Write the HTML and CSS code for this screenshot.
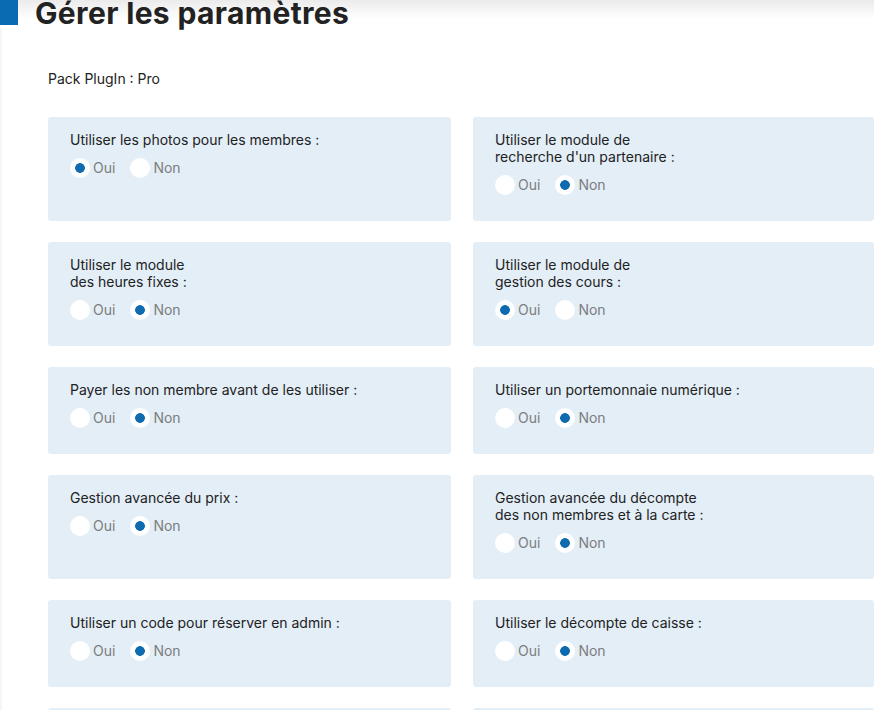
FILE: index.html
```html
<!DOCTYPE html>
<html lang="fr">
<head>
<meta charset="utf-8">
<title>Gérer les paramètres</title>
<link rel="stylesheet" href="styles.css">
</head>
<body>
<header class="page-header">
  <span class="accent"></span>
  <h1 class="title">Gérer les paramètres</h1>
</header>
<main class="content">
  <p class="pack">Pack PlugIn : Pro</p>
  <div class="grid">
    <section class="card">
      <p class="card-label">Utiliser les photos pour les membres :</p>
      <div class="choices">
        <label class="choice"><input type="radio" name="r1" checked><span>Oui</span></label>
        <label class="choice"><input type="radio" name="r1"><span>Non</span></label>
      </div>
    </section>
    <section class="card">
      <p class="card-label">Utiliser le module de<br>recherche d'un partenaire :</p>
      <div class="choices">
        <label class="choice"><input type="radio" name="r2"><span>Oui</span></label>
        <label class="choice"><input type="radio" name="r2" checked><span>Non</span></label>
      </div>
    </section>
    <section class="card">
      <p class="card-label">Utiliser le module<br>des heures fixes :</p>
      <div class="choices">
        <label class="choice"><input type="radio" name="r3"><span>Oui</span></label>
        <label class="choice"><input type="radio" name="r3" checked><span>Non</span></label>
      </div>
    </section>
    <section class="card">
      <p class="card-label">Utiliser le module de<br>gestion des cours :</p>
      <div class="choices">
        <label class="choice"><input type="radio" name="r4" checked><span>Oui</span></label>
        <label class="choice"><input type="radio" name="r4"><span>Non</span></label>
      </div>
    </section>
    <section class="card">
      <p class="card-label">Payer les non membre avant de les utiliser :</p>
      <div class="choices">
        <label class="choice"><input type="radio" name="r5"><span>Oui</span></label>
        <label class="choice"><input type="radio" name="r5" checked><span>Non</span></label>
      </div>
    </section>
    <section class="card">
      <p class="card-label">Utiliser un portemonnaie numérique :</p>
      <div class="choices">
        <label class="choice"><input type="radio" name="r6"><span>Oui</span></label>
        <label class="choice"><input type="radio" name="r6" checked><span>Non</span></label>
      </div>
    </section>
    <section class="card">
      <p class="card-label">Gestion avancée du prix :</p>
      <div class="choices">
        <label class="choice"><input type="radio" name="r7"><span>Oui</span></label>
        <label class="choice"><input type="radio" name="r7" checked><span>Non</span></label>
      </div>
    </section>
    <section class="card">
      <p class="card-label">Gestion avancée du décompte<br>des non membres et à la carte :</p>
      <div class="choices">
        <label class="choice"><input type="radio" name="r8"><span>Oui</span></label>
        <label class="choice"><input type="radio" name="r8" checked><span>Non</span></label>
      </div>
    </section>
    <section class="card">
      <p class="card-label">Utiliser un code pour réserver en admin :</p>
      <div class="choices">
        <label class="choice"><input type="radio" name="r9"><span>Oui</span></label>
        <label class="choice"><input type="radio" name="r9" checked><span>Non</span></label>
      </div>
    </section>
    <section class="card">
      <p class="card-label">Utiliser le décompte de caisse :</p>
      <div class="choices">
        <label class="choice"><input type="radio" name="r10"><span>Oui</span></label>
        <label class="choice"><input type="radio" name="r10" checked><span>Non</span></label>
      </div>
    </section>
    <section class="card">
      <p class="card-label">Utiliser les réservations récurrentes :</p>
      <div class="choices">
        <label class="choice"><input type="radio" name="r11"><span>Oui</span></label>
        <label class="choice"><input type="radio" name="r11" checked><span>Non</span></label>
      </div>
    </section>
    <section class="card">
      <p class="card-label">Utiliser les notifications par e-mail :</p>
      <div class="choices">
        <label class="choice"><input type="radio" name="r12" checked><span>Oui</span></label>
        <label class="choice"><input type="radio" name="r12"><span>Non</span></label>
      </div>
    </section>
  </div>
</main>
</body>
</html>
```
FILE: styles.css
```css
html {
  overflow: hidden;
}

body {
  margin: 0;
  font-family: Inter, "Noto Sans", "Liberation Sans", sans-serif;
  color: #222;
  background: #fff linear-gradient(#ebebeb 0, #f8f8f8 12px, #fff 20px) no-repeat;
  background-size: 100% 20px;
}

.page-header {
  display: flex;
  align-items: flex-start;
  gap: 17px;
  height: 28px;
}

.accent {
  display: block;
  width: 18px;
  height: 25px;
  background: #0a6bb3;
  flex: none;
}

.title {
  margin: 0;
  font-size: 30px;
  line-height: 26px;
  font-weight: 700;
  color: #222;
  letter-spacing: 0.35px;
  white-space: nowrap;
}

.content {
  padding: 42px 0 40px 46px;
  border-left: 2px solid #f6f6f6;
}

.pack {
  margin: 0 0 30px;
  font-size: 14px;
  line-height: 17px;
}

.grid {
  display: grid;
  grid-template-columns: 403px 1fr;
  column-gap: 22px;
  row-gap: 21px;
}

.card {
  background: #e3eef7;
  border-radius: 3px;
  padding: 14px 22px 26px;
}

.card-label {
  margin: 0 0 10px;
  font-size: 14px;
  line-height: 17px;
  color: #222;
}

.choices {
  display: flex;
  gap: 15px;
}

.choice {
  display: flex;
  align-items: center;
  gap: 3px;
  font-size: 14px;
  line-height: 20px;
  color: #7d7d7d;
}

.choice input {
  appearance: none;
  -webkit-appearance: none;
  margin: 0;
  width: 20px;
  height: 20px;
  border-radius: 50%;
  background: #fff;
  border: none;
  flex: none;
}

.choice input:checked {
  background: radial-gradient(circle, #0e6bb0 0 4.5px, #fff 5.2px);
}
```
